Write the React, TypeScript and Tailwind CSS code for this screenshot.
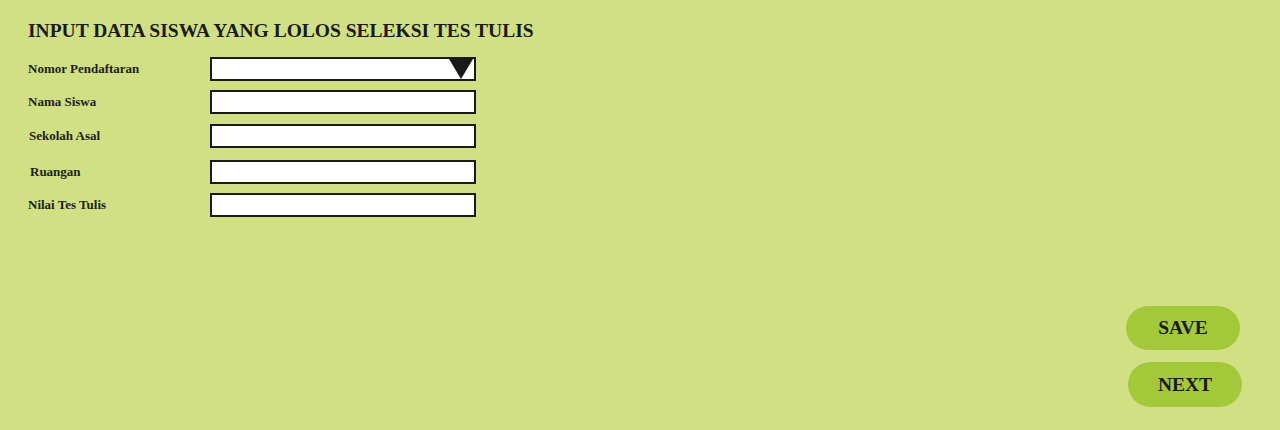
import React from "react";

const serif = { fontFamily: '"Liberation Serif", "Times New Roman", serif' };

function Row({ label, mt, select, lx = 0 }: { label: string; mt: string; select?: boolean; lx?: number }) {
  return (
    <div className={`flex items-center ${mt}`}>
      <div className="w-[182px] text-[13px] font-bold text-[#1e1e1e]" style={{ paddingLeft: lx }}>
        {label}
      </div>
      <div className="relative w-[266px] h-[24px] bg-white border-2 border-[#1a1a1a]">
        {select && (
          <svg className="absolute right-[1px] top-0" width="24" height="20" viewBox="0 0 24 20">
            <polygon points="0,0 24,0 12,20" fill="#1a1a1a" />
          </svg>
        )}
      </div>
    </div>
  );
}

export default function App() {
  return (
    <div className="w-[1280px] h-[430px] bg-[#d1e083] flex flex-col" style={serif}>
      <div className="pl-[28px] pt-[19px]">
        <h1 className="text-[19.5px] font-bold text-[#1a1a1a] leading-[23px]">
          INPUT DATA SISWA YANG LOLOS SELEKSI TES TULIS
        </h1>
        <Row label="Nomor Pendaftaran" mt="mt-[15px]" select />
        <Row label="Nama Siswa" mt="mt-[9px]" />
        <Row label="Sekolah Asal" mt="mt-[10px]" lx={1} />
        <Row label="Ruangan" mt="mt-[12px]" lx={2} />
        <Row label="Nilai Tes Tulis" mt="mt-[9px]" />
      </div>
      <div className="flex flex-col items-end pr-[38px] mt-[89px] gap-[12px]">
        <button className="w-[114px] h-[44px] rounded-full bg-[#a3c93a] text-[19.5px] font-bold text-[#1a1a1a] mr-[2px]">
          SAVE
        </button>
        <button className="w-[114px] h-[45px] rounded-full bg-[#a3c93a] text-[19.5px] font-bold text-[#1a1a1a]">
          NEXT
        </button>
      </div>
    </div>
  );
}
